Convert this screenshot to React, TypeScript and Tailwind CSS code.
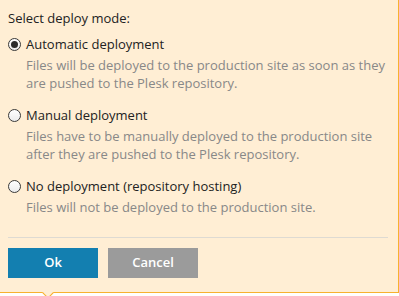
import React from "react";

function Radio({ checked }: { checked?: boolean }) {
  return (
    <span className="flex h-[13px] w-[13px] shrink-0 items-center justify-center rounded-full border border-[#3a3a3a] bg-gradient-to-b from-white to-[#ececec]">
      {checked && <span className="h-[7px] w-[7px] rounded-full bg-[#2b2b2b]" />}
    </span>
  );
}

function Option({ label, desc, checked }: { label: string; desc: React.ReactNode; checked?: boolean }) {
  return (
    <div className="flex flex-col">
      <label className="flex h-[20px] items-center gap-[5px] text-[13px] leading-[20px] text-[#222]">
        <Radio checked={checked} />
        <span>{label}</span>
      </label>
      <div className="mt-[2px] pl-[18px] text-[13px] leading-[18px] text-[#888]">{desc}</div>
    </div>
  );
}

export default function App() {
  return (
    <div className="h-[296px] w-[399px] bg-white" style={{ fontFamily: '"Open Sans", "Noto Sans", sans-serif' }}>
      <div className="relative flex h-[293px] w-[399px] flex-col border-b border-r border-[#f7b12f] bg-[#ffeed4] pl-[8px] pr-[10px] pt-[8px]">
        <div className="text-[13px] leading-[20px] text-[#222]">Select deploy mode:</div>
        <div className="mt-[6px] flex flex-col gap-[13px]">
          <Option
            checked
            label="Automatic deployment"
            desc={
              <>
                Files will be deployed to the production site as soon as they
                <br />
                are pushed to the Plesk repository.
              </>
            }
          />
          <Option
            label="Manual deployment"
            desc={
              <>
                Files have to be manually deployed to the production site
                <br />
                after they are pushed to the Plesk repository.
              </>
            }
          />
          <Option label="No deployment (repository hosting)" desc="Files will not be deployed to the production site." />
        </div>
        <div className="mt-[21px] h-px w-full bg-[#dedad2]" />
        <div className="mt-[10px] flex gap-[10px]">
          <button className="h-[30px] w-[90px] bg-[#137fb0] text-[13px] font-semibold text-white">Ok</button>
          <button className="h-[30px] w-[90px] bg-[#9b9b9b] text-[13px] font-semibold text-white">Cancel</button>
        </div>
        <span className="absolute bottom-[-5px] left-[44px] h-[8px] w-[8px] rotate-45 border-b border-r border-[#f7b12f] bg-[#ffeed4]" />
      </div>
    </div>
  );
}
